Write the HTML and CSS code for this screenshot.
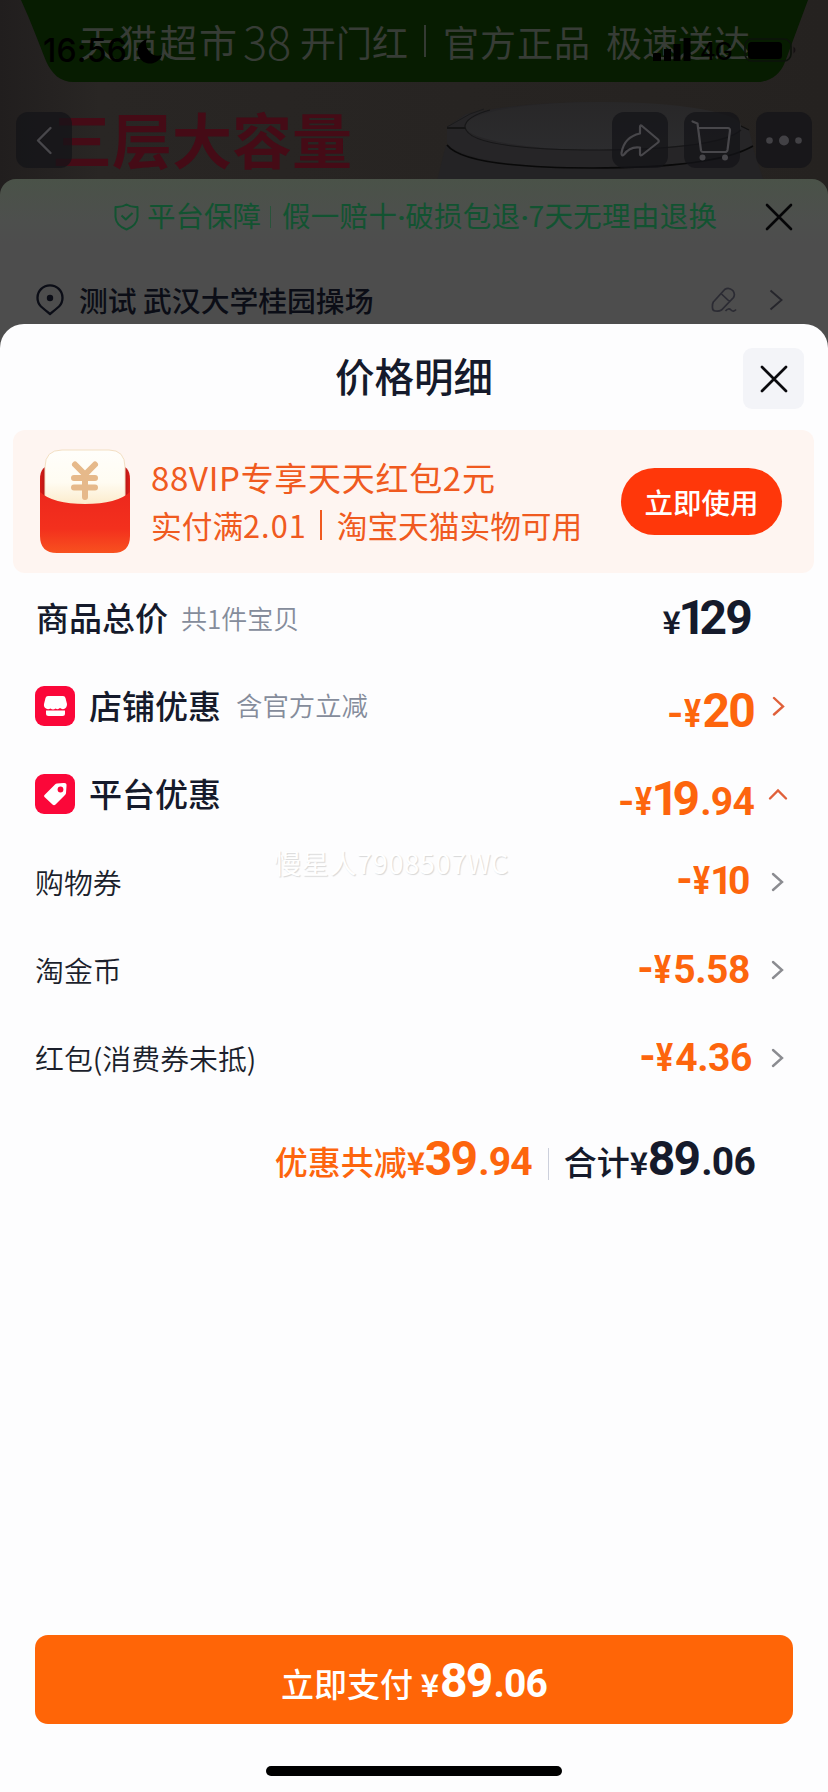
FILE: index.html
```html
<!DOCTYPE html>
<html lang="zh-CN">
<head>
<meta charset="utf-8">
<title>价格明细</title>
<link rel="stylesheet" href="styles.css">
</head>
<body>
<div class="screen">
  <div class="backdrop">
    <div class="hero">
      <svg class="scene" viewBox="0 0 828 200" width="828" height="200">
        <defs>
          <linearGradient id="wall" x1="0" y1="0" x2="1" y2="0"><stop offset="0" stop-color="#211e1e"/><stop offset=".12" stop-color="#292624"/><stop offset="1" stop-color="#252220"/></linearGradient>
          <linearGradient id="lid" x1="0" y1="0" x2="0" y2="1"><stop offset="0" stop-color="#282728"/><stop offset="1" stop-color="#2c2c2e"/></linearGradient>
        </defs>
        <rect width="828" height="200" fill="url(#wall)"/>
        <path d="M21 0C32 24 40 46 46 61C52 74 60 82 74 82H756C770 82 780 75 785 62L808 0Z" fill="#071c01"/>
        <path d="M432 200L446 145H752L770 200Z" fill="#242325"/>
        <path d="M447 127L466 114Q520 102 600 102Q690 102 749 130L753 146C730 160 670 168 592 168C510 168 455 157 447 143Z" fill="#262527"/>
        <path d="M447 127L470 114L484 109" fill="none" stroke="#1b1b1c" stroke-width="1"/>
        <path d="M447 128H465M749 130L725 118L700 112" fill="none" stroke="#111" stroke-width="1.3"/>
        <ellipse cx="603" cy="126" rx="138" ry="24" fill="url(#lid)"/>
        <path d="M490 110Q465 117 465 127Q468 150 600 150Q720 149 741 130" fill="none" stroke="#171718" stroke-width="1.2"/>
        <path d="M447 145Q465 168 592 168Q715 168 753 146" fill="none" stroke="#090909" stroke-width="1.6"/>
      </svg>
      <div class="banner"><span class="b1">天猫超市</span><span class="b2">38</span><span class="b3">开门红</span><i></i><span class="b4">官方正品</span><span class="b5">极速送达</span></div>
      <div class="slogan">三层大容量</div>
      <div class="status">
        <span class="clock">16:56</span>
        <svg class="moon" width="26" height="26" viewBox="0 0 26 26"><path d="M10 1A12.5 12.5 0 1 0 25 17A12 12 0 0 1 10 1Z" fill="#000"/></svg>
        <svg class="signal" width="38" height="24" viewBox="0 0 38 24"><path d="M0 16.500q0-1.500 1.500-1.500h5.500q1 0 1 1.500V23H0ZM11 11h7v12h-7ZM20.500 6h7v17h-7ZM30.500 0h7v23h-7Z"/></svg>
        <span class="net">4G</span>
        <svg class="battery" width="54" height="25" viewBox="0 0 54 25"><rect x="1" y="1" width="46" height="22" rx="7" fill="none" stroke="#0c120b" stroke-width="1.6"/><rect x="4" y="4" width="34" height="17" rx="3.500"/><path d="M49.500 8.500q4 3.500 0 7Z" fill="#151013"/></svg>
      </div>
      <div class="nav">
        <span class="nav-btn"><svg width="56" height="56" viewBox="0 0 56 56"><path d="M34.500 16L22 28.500L34.500 41" class="ln" stroke-width="2.400"/></svg></span>
        <span class="gap"></span>
        <span class="nav-btn"><svg width="56" height="56" viewBox="0 0 56 56"><path d="M28 15Q28 12.500 30 14L46 27.500Q47.500 29 46 30.500L30 43Q28 44 28 42V35.500Q18 34 12 42.500Q9.500 45 9.500 41Q12 25 28 21.500Z" class="ln" stroke-width="2.200"/></svg></span>
        <span class="nav-btn"><svg width="56" height="56" viewBox="0 0 56 56"><path d="M8.500 9.500L13.500 11.500L17 38.500Q17.500 40 19 40H41Q43 40 43.500 38L46 18.500Q46 16 44 16H14.500" class="ln" stroke-width="2.200"/><circle cx="18.500" cy="45.500" r="3" fill="#48474b"/><circle cx="41" cy="45.500" r="3" fill="#48474b"/></svg></span>
        <span class="nav-btn"><svg width="56" height="56" viewBox="0 0 56 56" fill="#424145"><circle cx="13.500" cy="28.500" r="3.300"/><circle cx="28" cy="28.500" r="5"/><circle cx="42.500" cy="28.500" r="3.300"/></svg></span>
      </div>
    </div>
    <div class="order">
      <div class="promise">
        <svg width="26" height="28" viewBox="0 0 26 28"><path d="M12.500 1.500Q17 4.500 23.500 4V14Q23 22.500 12.500 26.500Q2 22.500 1.500 14V4Q8 4.500 12.500 1.500ZM7.500 12.500L11.800 16.500L18.500 10" fill="none" stroke="#125331" stroke-width="2" stroke-linejoin="round"/></svg>
        <span class="p1">平台保障</span><i></i><span class="p2">假一赔十<em>·</em>破损包退<em>·</em>7天无理由退换</span>
        <svg class="x" width="28" height="28" viewBox="0 0 28 28"><path d="M2 2L26 26M26 2L2 26" stroke="#050507" stroke-width="2.600" stroke-linecap="round"/></svg>
      </div>
      <div class="address">
        <svg width="28" height="32" viewBox="0 0 28 32"><path d="M14 30Q9 26 5 22.500A12.500 12.500 0 1 1 23 22.500Q19 26 14 30Z" fill="none" stroke="#0b0d16" stroke-width="2.300" stroke-linejoin="round"/><circle cx="14" cy="14" r="3.200" fill="#0b0d16"/></svg>
        <span class="addr">测试 武汉大学桂园操场</span>
        <svg class="pen" width="26" height="28" viewBox="0 0 26 28"><path d="M2.300 16L14 3.200Q18 .8 21.800 4.500Q24.500 8 22.500 11.500L10.500 24Q8 25.500 4.500 25Q1.500 24.800 1.500 22Q1.200 18 2.300 16ZM10.500 8L18.500 15.500M14.500 25Q17.500 21.500 20 24T25 23.500" fill="none" stroke="#2b2b33" stroke-width="1.700"/></svg>
        <svg class="go" width="14" height="22" viewBox="0 0 14 22"><path d="M1.500 1.500L12.500 11L1.500 20.500" fill="none" stroke="#26262c" stroke-width="1.900"/></svg>
      </div>
    </div>
  </div>

  <div class="sheet">
    <div class="title">
      <h1>价格明细</h1>
      <button class="close"><svg width="28" height="28" viewBox="0 0 28 28"><path d="M2 2L26 26M26 2L2 26" stroke="#0a0a0e" stroke-width="2.700" stroke-linecap="round"/></svg></button>
    </div>
    <div class="coupon">
      <svg width="92" height="106" viewBox="0 0 92 106">
        <defs>
          <linearGradient id="red" x1="0" y1="0" x2="0" y2="1"><stop offset="0" stop-color="#ed281d"/><stop offset=".6" stop-color="#f3301d"/><stop offset="1" stop-color="#f8511f"/></linearGradient>
          <linearGradient id="back" x1="0" x2="1"><stop offset="0" stop-color="#d91b14"/><stop offset=".06" stop-color="#b31415"/><stop offset=".94" stop-color="#b31415"/><stop offset="1" stop-color="#df2119"/></linearGradient>
          <linearGradient id="paper" x1="0" y1="0" x2="0" y2="1"><stop offset="0" stop-color="#fffefb"/><stop offset=".55" stop-color="#fffcf2"/><stop offset="1" stop-color="#fbe8c4"/></linearGradient>
        </defs>
        <path d="M1 30Q1 16 14 16H78Q91 16 91 30V60H1Z" fill="url(#back)"/>
        <path d="M6 60V18Q6 1 23 1H70Q86 1 86 18V60Z" fill="url(#paper)" stroke="#f3dfc3" stroke-width="1"/>
        <path d="M36 15.500L46 25.500L56 15.500M35 29H56M35 38.500H56M46 28V48" fill="none" stroke="#e6b98a" stroke-width="6" stroke-linecap="round"/>
        <path d="M1 43Q14 55 46 55Q78 55 91 43V87Q91 104 74 104H18Q1 104 1 87Z" fill="url(#red)"/>
      </svg>
      <div class="coupon-text"><p class="c1">88VIP专享天天红包2元</p><p class="c2">实付满<b>2.01</b><i></i>淘宝天猫实物可用</p></div>
      <button class="use">立即使用</button>
    </div>

    <div class="row"><span class="label">商品总价</span><span class="sub s1">共1件宝贝</span><span class="price dark r0"><span class="yen">¥</span><span class="one">1</span>29</span></div>
    <div class="row"><svg class="badge" width="40" height="40" viewBox="0 0 40 40"><rect width="40" height="40" rx="9" fill="#fb0739"/><path d="M13 10H28Q30 10 30.500 12L32 18Q32 22 29 23Q26.500 23.500 25 22Q23 24 20.500 22.500Q18 24.500 15.500 22.500Q13 24 11 22.500Q8.500 21 9 18L10.500 12Q11 10 13 10ZM11 24.500H30V27.500Q30 30 27.500 30H13.500Q11 30 11 27.500Z" fill="#fff"/></svg><span class="label">店铺优惠</span><span class="sub s2">含官方立减</span><span class="price r1"><span class="minus">-</span><span class="yen2">¥</span>20</span><svg class="arr" width="22" height="20" viewBox="0 0 22 20"><path d="M7 2L16 10.500L7 18.500" stroke="#e0603a"/></svg></div>
    <div class="row"><svg class="badge" width="40" height="40" viewBox="0 0 40 40"><rect width="40" height="40" rx="9" fill="#fb0739"/><path d="M22 9.500L28.500 9Q32 8.500 31.500 12L31 19Q31 20 30 21L20.500 30.500Q19 32 17.500 30.500L9.500 23Q8.500 22 9.500 21L20 10.500Q21 9.500 22 9.500Z" fill="#fff"/><circle cx="25.500" cy="15.500" r="2.900" fill="#fb0739"/></svg><span class="label">平台优惠</span><span class="price r1"><span class="minus">-</span><span class="yen2">¥</span><span class="one">1</span>9<small>.94</small></span><svg class="arr" width="22" height="20" viewBox="0 0 22 20"><path d="M3 14.500L11 6.500L19 14.500" stroke="#e0603a"/></svg></div>
    <div class="row"><span class="item">购物券</span><span class="price mini m1"><span class="minus">-</span><span class="yen2">¥</span><span class="one">1</span>0</span><svg class="arr" width="22" height="20" viewBox="0 0 22 20"><path d="M6 2L15 10L6 18" stroke="#8b8c91"/></svg></div>
    <div class="row"><span class="item">淘金币</span><span class="price mini m2"><span class="minus">-</span><span class="yen2">¥</span>5.58</span><svg class="arr" width="22" height="20" viewBox="0 0 22 20"><path d="M6 2L15 10L6 18" stroke="#8b8c91"/></svg></div>
    <div class="row"><span class="item">红包(消费券未抵)</span><span class="price mini m3"><span class="minus">-</span><span class="yen2">¥</span>4.36</span><svg class="arr" width="22" height="20" viewBox="0 0 22 20"><path d="M6 2L15 10L6 18" stroke="#8b8c91"/></svg></div>

    <div class="total"><span class="price"><span class="word">优惠共减</span><span class="yen">¥</span>39<small>.94</small></span><i></i><span class="price dark"><span class="word">合计</span><span class="yen">¥</span>89<small>.06</small></span></div>
    <div class="watermark">慢星人7908507WC</div>
    <div class="spacer"></div>
    <button class="pay"><span class="price white"><span class="word">立即支付</span><span class="yen">¥</span>89<small>.06</small></span></button>
    <div class="home"></div>
  </div>
</div>
</body>
</html>
```
FILE: styles.css
```css
* { box-sizing: border-box; }
body { margin: 0; font-family: "Noto Sans CJK SC", sans-serif; }
h1, p { margin: 0; font-weight: 500; }
button { border: 0; padding: 0; font: inherit; }
svg { display: block; flex: none; }
i { display: block; flex: none; }
.screen { width: 828px; height: 1792px; overflow: hidden; background: #1d1b1b; }
.backdrop { height: 350px; }

/* dimmed product page */
.hero { height: 179px; position: relative; }
.scene { position: absolute; left: 0; top: 0; }
.banner { position: absolute; left: 79px; top: 14px; display: flex; height: 54px; line-height: 54px; font-size: 38px; color: #373c36; white-space: nowrap; }
.banner span { flex: none; }
.b1 { width: 164px; letter-spacing: 2px; }
.b2 { width: 57px; font-size: 45px; font-weight: 300; }
.b3 { width: 124px; font-size: 36px; }
.banner i { width: 2px; height: 32px; margin: 11px 17px 0 0; background: #343a33; }
.b4 { width: 163px; font-size: 36px; letter-spacing: 1px; }
.b5 { font-size: 36px; }
.slogan { position: absolute; left: 52px; top: 99px; font-size: 60px; line-height: 78px; font-weight: 700; color: #450b16; }
.status { position: absolute; left: 43px; top: 38px; width: 760px; height: 26px; display: flex; }
.clock { width: 94px; font: 500 32px/26px Inter, sans-serif; letter-spacing: .2px; }
.signal { margin: 0 0 0 490px; }
.net { width: 44px; margin-left: 9px; font: 500 24px/27px Inter, sans-serif; letter-spacing: -1px; }
.battery { margin-top: 0; }
.nav { position: absolute; left: 16px; right: 16px; top: 112px; display: flex; gap: 16px; }
.nav-btn { width: 56px; height: 56px; border-radius: 12px; background: rgba(19, 19, 23, .72); }
.gap { flex: 1; }
.ln { fill: none; stroke: #48474b; stroke-linejoin: round; stroke-linecap: round; }
.order { position: relative; height: 171px; border-radius: 16px 16px 0 0; background: linear-gradient(#4a5248, #4d4f4d 42px, #4d4d4d 65px); }
.promise { height: 75px; padding: 0 35px 0 114px; display: flex; align-items: center; font-size: 28.5px; color: #125331; line-height: 40px; }
.promise span { margin-top: -4px; white-space: nowrap; flex: none; }
.p1 { margin-left: 7px; width: 116px; }
.promise i { width: 1px; height: 22px; margin: 0 11px 0 7px; background: #28533a; }
.promise em { display: inline-block; width: 8px; font: 700 28px/30px Roboto, sans-serif; text-align: center; }
.p2 { letter-spacing: .3px; }
.x { margin-left: auto; }
.address { padding: 0 37px 0 36px; height: 92px; display: flex; align-items: center; color: #0b0d16; }
.addr { margin: -2px 0 0 15px; font-size: 28.8px; font-weight: 500; }
.pen { margin-left: auto; }
.go { margin: 0 8px 0 32px; }

/* price sheet */
.sheet { position: relative; height: 1468px; margin-top: -26px; border-radius: 24px 24px 0 0; background: #fdfdfe; color: #151a2b; display: flex; flex-direction: column; }
.title { height: 106px; flex: none; display: grid; grid-template-columns: 1fr auto 1fr; align-items: center; padding: 0 24px; }
h1 { grid-column: 2; font-size: 39.5px; line-height: 60px; margin-top: -4px; }
.close { justify-self: end; width: 61px; height: 61px; margin-top: 3px; border-radius: 9px; background: #f3f4f8; display: grid; place-items: center; }
.coupon { height: 143px; flex: none; margin: 0 14px 1px 13px; border-radius: 12px; background: #fef5f1; display: flex; align-items: center; padding: 0 32px 0 26px; color: #f05a20; }
.coupon-text { margin: -2px 0 0 20px; }
.coupon-text p { font-weight: 400; white-space: nowrap; line-height: 48px; }
.c1 { font-size: 33px; letter-spacing: .7px; }
.c2 { font-size: 30.7px; display: flex; }
.c2 b { font-weight: 400; letter-spacing: 1px; }
.c2 i { width: 2px; height: 30px; margin: 9px 15px 0 13px; background: #f05a20; }
.use { width: 161px; height: 67px; margin-left: auto; border-radius: 34px; background: #ff370a; color: #fff; font-size: 28.5px; font-weight: 500; line-height: 62px; }
.row { height: 88px; flex: none; padding: 0 39px 0 35px; display: flex; align-items: center; }
.label { font-size: 33px; font-weight: 500; line-height: 48px; margin: -2px 0 0 1px; }
.badge + .label { margin-left: 14px; }
.sub { font-size: 26px; font-weight: 350; color: #858c9b; line-height: 40px; margin: -1px 0 0 13px; }
.s2 { font-size: 26.4px; margin-left: 15px; margin-top: -3px; }
.item { font-size: 28.9px; font-weight: 350; line-height: 44px; margin-top: -2px; color: #1b1f2c; }
.price { font: 700 48px/88px Roboto, sans-serif; letter-spacing: -1.8px; color: #fd650d; white-space: nowrap; align-self: flex-start; margin-left: auto; }
.price span, .price small { line-height: 0; }
.price small { font-size: 39px; letter-spacing: -.8px; margin-left: 2px; }
.price .one { letter-spacing: -6.5px; margin-left: -2px; }
.price.dark { color: #151a2b; }
.price.white { color: #fff; }
.price .word { letter-spacing: 0; }
.yen { display: inline-block; width: 18px; letter-spacing: 0; font-family: "Noto Sans CJK SC", sans-serif; font-weight: 700; font-size: 31px; }
.yen2 { display: inline-block; width: 19px; font-size: 38px; letter-spacing: 0; transform: scaleX(.84); transform-origin: left; }
.minus { display: inline-block; width: 17px; font-size: 38px; letter-spacing: 0; transform: scaleX(1.1); transform-origin: left; }
.r0 { margin-right: 38px; }
.r1 { padding-top: 5px; margin-right: 13px; height: 88px; }
.mini { font-size: 39px; letter-spacing: -.4px; }
.m1, .m2 { margin-right: 17px; }
.m3 { margin-right: 15px; }
.m1 { margin-top: -1px; }
.mini .one { letter-spacing: -4.5px; }
.mini .minus { font-size: 42px; transform: none; }
.arr { fill: none; stroke-width: 2.4; stroke-linecap: round; }
.total { height: 90px; flex: none; display: flex; justify-content: flex-end; padding-right: 73px; }
.total .price { line-height: 113px; margin-left: 0; }
.total i { width: 1px; height: 32px; background: #ccd0dc; margin: 46px 15px 0 16px; }
.word { font-family: "Noto Sans CJK SC", sans-serif; font-size: 33px; font-weight: 500; }
.watermark { position: absolute; left: 274px; top: 519px; font-size: 27px; line-height: 40px; letter-spacing: .7px; color: #fff; text-shadow: 1px 1px 1px #d8d8d8; white-space: nowrap; }
.spacer { flex: 1; }
.pay { flex: none; height: 89px; margin: 0 35px; border-radius: 13px; background: #ff6507; display: flex; justify-content: center; }
.pay .price { line-height: 91px; margin: 0; }
.pay .yen { margin-left: 7px; width: 20px; }
.home { flex: none; align-self: center; width: 296px; height: 10px; margin: 42px 0 16px; border-radius: 5px; background: #000; }
```
